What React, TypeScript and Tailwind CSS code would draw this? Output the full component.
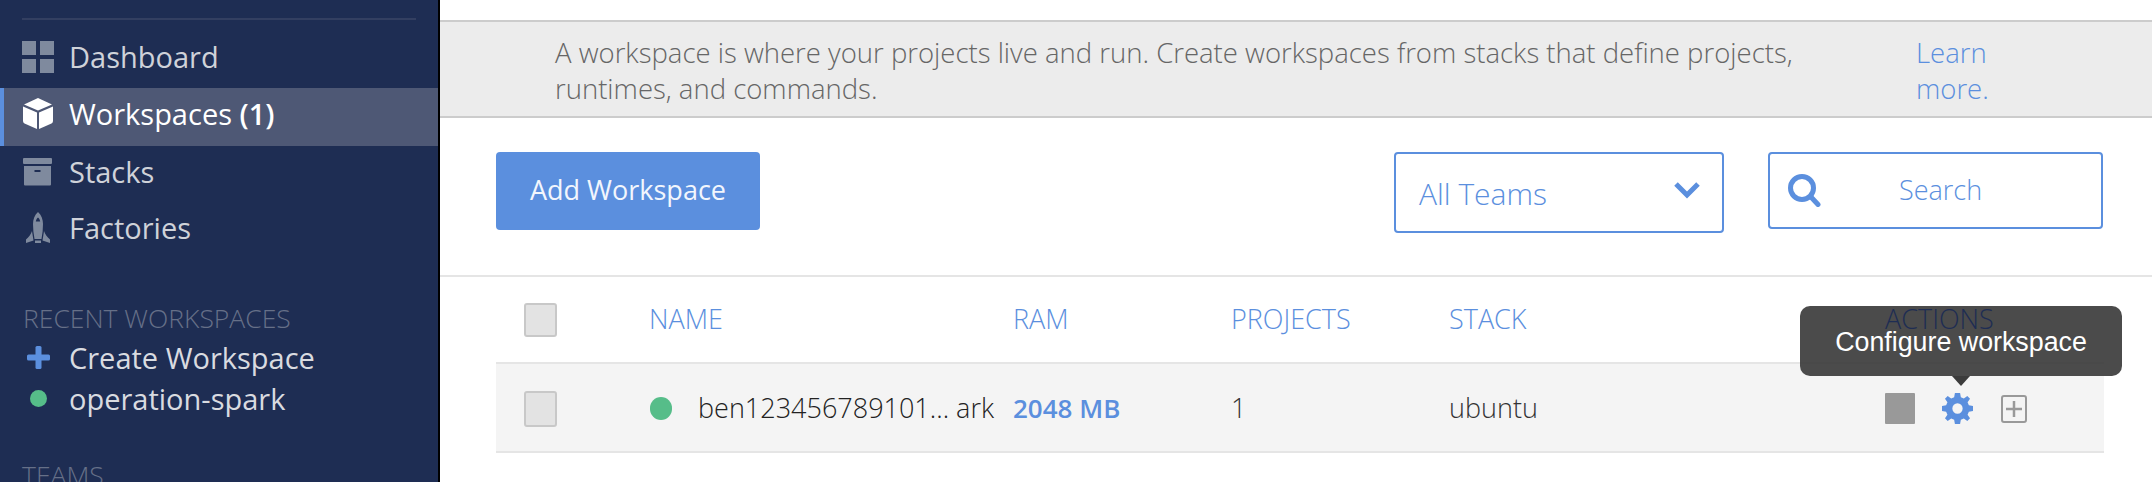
const font = "[font-family:'Open_Sans',sans-serif]";

function GridIcon() {
  return (
    <svg width="32" height="32" viewBox="0 0 32 32" className="fill-[#7f8a9e]">
      <rect x="0" y="0" width="14" height="14" />
      <rect x="18" y="0" width="14" height="14" />
      <rect x="0" y="18" width="14" height="14" />
      <rect x="18" y="18" width="14" height="14" />
    </svg>
  );
}

function CubeIcon() {
  return (
    <svg width="30" height="31" viewBox="0 0 30 31" className="fill-white">
      <path d="M15 0L29 6.5L15 12.5L1 6.5Z" />
      <path d="M0 8.5L14 14.5V31L1.5 25.5Q0 24.8 0 23Z" />
      <path d="M30 8.5L16 14.5V31L28.5 25.5Q30 24.8 30 23Z" />
    </svg>
  );
}

function ArchiveIcon() {
  return (
    <svg width="30" height="28" viewBox="0 0 30 28" className="fill-[#7f8a9e]">
      <rect x="0" y="0" width="29" height="6" rx="1" />
      <path fillRule="evenodd" d="M1 8H28V26.500Q28 27.500 27 27.500H2Q1 27.500 1 26.500ZM11.500 12V14H17.500V12Z" />
    </svg>
  );
}

function RocketIcon() {
  return (
    <svg width="24" height="32" viewBox="0 0 24 32" className="fill-[#7f8a9e]">
      <path fillRule="evenodd" d="M12 0C15.5 3 17 7.500 17 12C17 17 16.500 22 15.500 27H8.500C7.500 22 7 17 7 12C7 7.500 8.500 3 12 0ZM12 5.500C10.800 6.500 10 8 9.800 9.500H14.200C14 8 13.200 6.500 12 5.500Z" />
      <path d="M6 19C5 22 3 25 0 27.500V31L7.500 28.500Z" />
      <path d="M18 19C19 22 21 25 24 27.500V31L16.500 28.500Z" />
      <rect x="9" y="28.500" width="6" height="2.500" />
    </svg>
  );
}

function PlusIcon() {
  return (
    <svg width="23" height="23" viewBox="0 0 23 23" className="fill-[#5b8fde]">
      <rect x="8.500" y="0" width="6" height="23" rx="1.500" />
      <rect x="0" y="8.500" width="23" height="6" rx="1.500" />
    </svg>
  );
}

function GearIcon() {
  return (
    <svg width="31" height="31" viewBox="0 0 24 24" className="fill-[#5b8fde]">
      <path fillRule="evenodd" d="M10 0H14L14.600 3.200L16.900 4.200L19.600 2.300L21.700 4.400L19.800 7.100L20.800 9.400L24 10V14L20.800 14.600L19.800 16.900L21.700 19.600L19.600 21.700L16.900 19.800L14.600 20.800L14 24H10L9.400 20.800L7.100 19.800L4.400 21.700L2.300 19.600L4.200 16.900L3.200 14.600L0 14V10L3.200 9.400L4.200 7.100L2.300 4.400L4.400 2.300L7.100 4.200L9.400 3.200ZM12 8A4 4 0 1 0 12 16A4 4 0 1 0 12 8Z" />
    </svg>
  );
}

function SearchIcon() {
  return (
    <svg width="33" height="33" viewBox="0 0 33 33" className="fill-none stroke-[#5b8fde]" strokeWidth="5" strokeLinecap="round">
      <circle cx="14" cy="14" r="11.500" />
      <path d="M23 23L30 30.500" />
    </svg>
  );
}

function NavRow({ icon, active, children, h }: { icon: React.ReactNode; active?: boolean; children: React.ReactNode; h: string }) {
  return (
    <div className={`flex items-center ${h} ${active ? "pb-[7px] bg-[#4e5875] border-l-4 border-[#5b8fde] pl-[18px] text-white" : "pb-[5px] pl-[22px] text-[#cfd2d9]"}`}>
      <span className="flex w-[32px] justify-center">{icon}</span>
      <span className="ml-[15px] text-[29px] leading-none">{children}</span>
    </div>
  );
}

function Sidebar() {
  return (
    <aside className="w-[440px] h-[482px] shrink-0 overflow-hidden bg-[#1e2d53] border-r-2 border-black pt-[18px]">
      <div className="mx-[22px] h-[2px] bg-[#333f61] mb-[10px]" />
      <NavRow h="h-[58px]" icon={<GridIcon />}>Dashboard</NavRow>
      <NavRow h="h-[58px]" active icon={<CubeIcon />}>
        Workspaces <b className="font-semibold">(1)</b>
      </NavRow>
      <NavRow h="h-[56px]" icon={<ArchiveIcon />}>Stacks</NavRow>
      <NavRow h="h-[56px]" icon={<RocketIcon />}>Factories</NavRow>
      <div className="mt-[44px] pl-[23px] text-[26.500px] leading-[32px] font-light text-[#667088]">RECENT WORKSPACES</div>
      <div className="flex items-center h-[42px] mt-[2px] pl-[22px] text-[#d9dbe0]">
        <span className="flex w-[32px] justify-center"><PlusIcon /></span>
        <span className="ml-[15px] text-[29px] leading-none">Create Workspace</span>
      </div>
      <div className="flex items-center h-[41px] pl-[22px] text-[#d9dbe0]">
        <span className="flex w-[32px] justify-center"><span className="block w-[17px] h-[17px] rounded-full bg-[#56bd89]" /></span>
        <span className="ml-[15px] text-[29px] leading-none">operation-spark</span>
      </div>
      <div className="mt-[40px] pl-[22px] text-[26.500px] leading-[32px] font-light text-[#667088]">TEAMS</div>
    </aside>
  );
}

function Table() {
  return (
    <div className="relative ml-[56px] w-[1608px]">
      <div className="flex items-center h-[85px] text-[27px] font-light text-[#5b8fde]">
        <span className="block ml-[28px] w-[33px] h-[34px] rounded-[3px] bg-[#e3e3e3] border-2 border-[#c8c8c8]" />
        <span className="ml-[92px] w-[364px]">NAME</span>
        <span className="w-[218px]">RAM</span>
        <span className="w-[218px]">PROJECTS</span>
        <span className="w-[436px]">STACK</span>
        <span className="relative z-10 text-[#1e2d53]">ACTIONS</span>
      </div>
      <div className="flex items-center h-[91px] pt-[2px] bg-[#f4f4f4] border-y-2 border-[#e5e5e5] text-[27px] font-light text-[#222]">
        <span className="block ml-[28px] w-[33px] h-[36px] rounded-[3px] bg-[#e3e3e3] border-2 border-[#c8c8c8]" />
        <span className="ml-[93px] block w-[22px] h-[23px] rounded-full bg-[#56bd89]" />
        <span className="ml-[26px] w-[315px] whitespace-nowrap">ben123456789101... ark</span>
        <span className="w-[218px] text-[26px] font-semibold text-[#5b8fde]">2048 MB</span>
        <span className="w-[218px] text-[#333]">1</span>
        <span className="w-[436px] text-[#333]">ubuntu</span>
        <span className="flex items-center">
          <span className="block w-[30px] h-[31px] bg-[#999] rounded-[1px]" />
          <span className="ml-[27px] flex"><GearIcon /></span>
          <span className="ml-[28px] flex items-center justify-center w-[26px] h-[28px] rounded-[3px] border-[2.500px] border-[#999]">
            <svg width="18" height="18" viewBox="0 0 18 18" className="stroke-[#999]" strokeWidth="2.500"><path d="M9 1V17M1 9H17" /></svg>
          </span>
        </span>
      </div>
      <div className="absolute left-[1304px] top-[29px] w-[322px] h-[70px] rounded-[10px] bg-[#3c3c3c]/[0.92] flex justify-center pt-[20px] [font-family:'Liberation_Sans',sans-serif] text-[26.800px] leading-[32px] text-white">
        Configure workspace
        <span className="absolute left-[152px] top-[70px] w-0 h-0 border-x-[9px] border-x-transparent border-t-[10px] border-t-[#3c3c3c]" />
      </div>
    </div>
  );
}

export default function App() {
  return (
    <div className={`flex w-[2152px] h-[482px] overflow-hidden bg-white ${font}`}>
      <Sidebar />
      <main className="flex-1 min-w-0 pt-[20px]">
        <div className="flex h-[98px] bg-[#ececec] border-y-2 border-[#cccccc] pl-[115px] text-[27.500px] leading-[36px] font-light text-[#666] pt-[13px]">
          <p className="w-[1320px]">A workspace is where your projects live and run. Create workspaces from stacks that define projects, runtimes, and commands.</p>
          <p className="ml-[41px] w-[90px] text-[#5b8fde]">Learn more.</p>
        </div>
        <div className="flex items-start mt-[34px] ml-[56px]">
          <button className="w-[264px] h-[78px] rounded-[4px] bg-[#5b8fde] text-[27px] font-medium text-[#f2f6fd] pb-[2px]">Add Workspace</button>
          <div className="ml-[634px] flex items-center justify-between w-[330px] h-[81px] rounded-[4px] border-2 border-[#5b8fde] pl-[23px] pr-[22px] text-[30px] font-light text-[#5b8fde]">
            <span className="pt-[2px]">All Teams</span>
            <svg width="26" height="18" viewBox="0 0 26 18" className="mb-[6px] fill-none stroke-[#5b8fde]" strokeWidth="5"><path d="M2 3L13 14L24 3" /></svg>
          </div>
          <div className="ml-[44px] flex items-center w-[335px] h-[77px] rounded-[4px] border-2 border-[#5b8fde] pl-[18px] text-[27px] font-light text-[#5b8fde]">
            <SearchIcon />
            <span className="ml-[78px]">Search</span>
          </div>
        </div>
        <div className="mt-[42px] h-[2px] bg-[#e5e5e5]" />
        <Table />
      </main>
    </div>
  );
}
